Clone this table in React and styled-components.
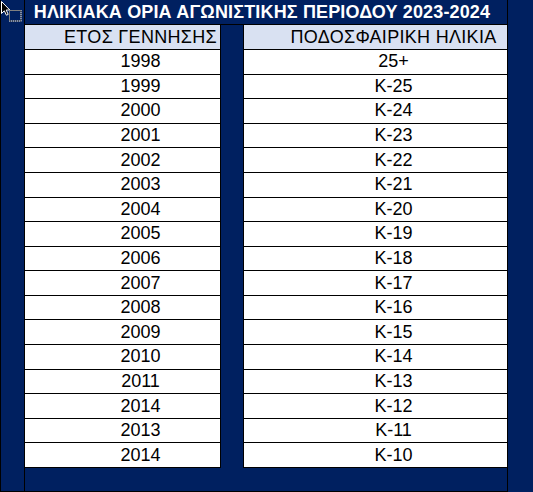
import styled, { createGlobalStyle } from "styled-components";

const NAVY = "#002060";

const rows = [
    ["1998", "25+"],
    ["1999", "Κ-25"],
    ["2000", "Κ-24"],
    ["2001", "Κ-23"],
    ["2002", "Κ-22"],
    ["2003", "Κ-21"],
    ["2004", "Κ-20"],
    ["2005", "Κ-19"],
    ["2006", "Κ-18"],
    ["2007", "Κ-17"],
    ["2008", "Κ-16"],
    ["2009", "Κ-15"],
    ["2010", "Κ-14"],
    ["2011", "Κ-13"],
    ["2014", "Κ-12"],
    ["2013", "Κ-11"],
    ["2014", "Κ-10"],
];

const GlobalStyle = createGlobalStyle`
    * { box-sizing: border-box; }
    body {
        margin: 0;
        background: ${NAVY};
        font-family: "Liberation Sans", Arial, sans-serif;
    }
`;

const App = function () {
    return (
        <>
            <GlobalStyle />
            <Sheet>
                <Gutter>
                    <Cursor width="24" height="24" viewBox="0 0 24 24">
                        <path d="M1.5 1.5 L1.5 13.5 L4.3 10.8 L6.4 15.2 L8.2 14.4 L6.2 10 L9.8 10 Z" fill="#000" stroke="#fff" strokeWidth="1" strokeLinejoin="round" />
                        <rect x="9.5" y="10.5" width="11.5" height="10.5" fill="none" stroke="#fff" strokeWidth="1" />
                        <rect x="9.5" y="10.5" width="11.5" height="10.5" fill="none" stroke="#000" strokeWidth="1" strokeDasharray="1 1" />
                    </Cursor>
                </Gutter>
                <Table>
                    <Title>ΗΛΙΚΙΑΚΑ ΟΡΙΑ ΑΓΩΝΙΣΤΙΚΗΣ ΠΕΡΙΟΔΟΥ 2023-2024</Title>
                    <Columns>
                        <Column>
                            <HeadCell>ΕΤΟΣ ΓΕΝΝΗΣΗΣ</HeadCell>
                            <Body>
                                {rows.map((r, i) => <Cell key={i}>{r[0]}</Cell>)}
                            </Body>
                        </Column>
                        <Divider />
                        <Column>
                            <HeadCell>ΠΟΔΟΣΦΑΙΡΙΚΗ ΗΛΙΚΙΑ</HeadCell>
                            <Body>
                                {rows.map((r, i) => <Cell key={i}>{r[1]}</Cell>)}
                            </Body>
                        </Column>
                    </Columns>
                    <Footer />
                </Table>
                <RightGutter />
            </Sheet>
        </>
    )
}

export default App;

const Sheet = styled.div`
    width: 533px;
    height: 492px;
    display: grid;
    grid-template-columns: 25px 483px 25px;
    background: ${NAVY};
    overflow: hidden;
`

const Gutter = styled.div`
    position: relative;
    border-left: 1px solid #000;
    border-right: 1px solid #000;
    border-bottom: 1px solid #000;
`

const RightGutter = styled.div`
    background: ${NAVY};
`

const Cursor = styled.svg`
    position: absolute;
    top: 0;
    left: -1px;
`

const Table = styled.div`
    display: flex;
    flex-direction: column;
    border-right: 1px solid #000;
    border-bottom: 1px solid #000;
`

const Title = styled.div`
    height: 25px;
    border-bottom: 1px solid #000;
    color: #fff;
    font-size: 18px;
    font-weight: 700;
    letter-spacing: 0.15px;
    display: flex;
    align-items: center;
    justify-content: center;
    padding-right: 8px;
    white-space: nowrap;
`

const Columns = styled.div`
    display: grid;
    grid-template-columns: 195px 24px 263px;
`

const Column = styled.div`
    display: flex;
    flex-direction: column;
    background: #fff;
`

const Divider = styled.div`
    background: ${NAVY};
    border-left: 1px solid #000;
    border-right: 1px solid #000;
`

const HeadCell = styled.div`
    height: 25px;
    background: #d9e1f2;
    border-bottom: 1px solid #000;
    color: #000;
    font-size: 18px;
    letter-spacing: 0.3px;
    display: flex;
    align-items: center;
    justify-content: center;
    padding-left: 36px;
    padding-top: 1px;
    white-space: nowrap;
`

const Body = styled.div`
    height: 418px;
    display: grid;
    grid-template-rows: repeat(17, 1fr);
`

const Cell = styled.div`
    border-bottom: 1px solid #000;
    color: #000;
    font-size: 18px;
    display: flex;
    align-items: center;
    justify-content: center;
    padding-left: 36px;
`

const Footer = styled.div`
    flex: 1;
    background: ${NAVY};
`
